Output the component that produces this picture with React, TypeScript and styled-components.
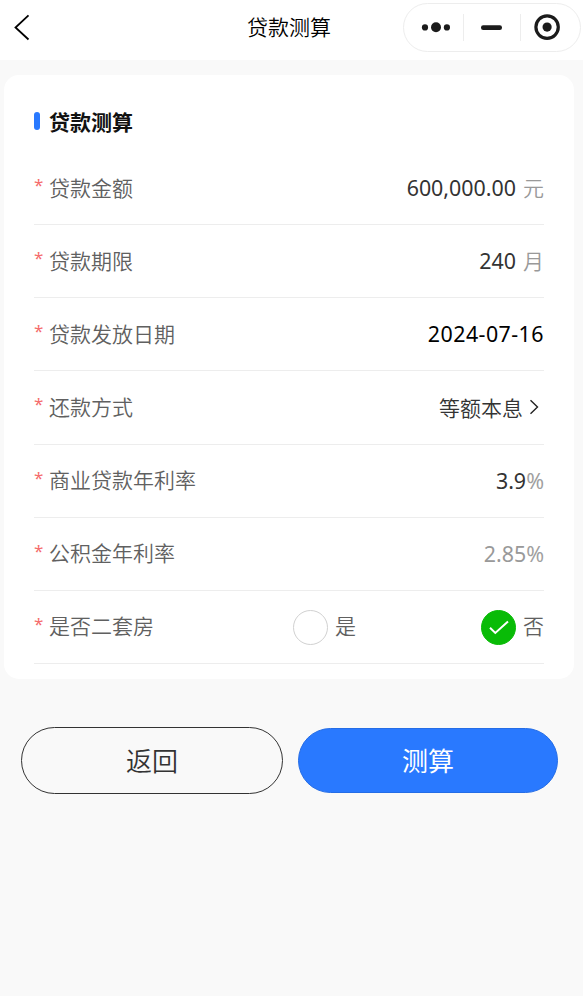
import React from 'react';
import styled, { createGlobalStyle } from 'styled-components';

const GlobalStyle = createGlobalStyle`
  * { box-sizing: border-box; }
  html, body { margin: 0; background: #f9f9f9; }
  body { font-family: 'Noto Sans', 'Noto Sans CJK SC', sans-serif; color: #333; }
  button { font: inherit; }
`;

const cjk = "'Noto Sans CJK SC', sans-serif";

const Page = styled.div`
  width: 583px;
  min-height: 996px;
  background: #f9f9f9;
`;

const NavBar = styled.header`
  display: grid;
  grid-template-columns: 175px 1fr 178px;
  height: 60px;
  padding: 3px 2px 0 0;
  background: #fff;
`;

const BackButton = styled.button`
  justify-self: start;
  width: 44px;
  height: 49px;
  padding: 0;
  border: 0;
  background: none;
  svg { display: block; }
`;

const NavTitle = styled.h1`
  margin: 0;
  font: 350 21px/47px ${cjk};
  color: #000;
  text-align: center;
`;

const Capsule = styled.div`
  display: grid;
  grid-template-columns: 60px 57px 1fr;
  align-items: center;
  width: 178px;
  height: 49px;
  border: 1px solid #ededed;
  border-radius: 25px;
`;

const CapsuleItem = styled.div<{ $divided?: boolean }>`
  height: 27px;
  border-right: ${p => (p.$divided ? '1px solid #ededed' : '0')};
  svg { display: block; }
`;

const Card = styled.section`
  width: 570px;
  height: 604px;
  margin: 15px 0 0 4px;
  padding: 0 30px;
  border-radius: 15px;
  background: #fff;
`;

const CardHeading = styled.div`
  display: flex;
  align-items: center;
  height: 76.97px;
  padding-top: 16px;
`;

const Accent = styled.span`
  width: 6px;
  height: 18px;
  margin-right: 9px;
  border-radius: 3px;
  background: #2979ff;
`;

const CardTitle = styled.h2`
  margin: -1px 0 0;
  font: 700 21px/30px ${cjk};
  color: #111;
`;

const Row = styled.div`
  display: flex;
  justify-content: space-between;
  align-items: center;
  height: 73.15px;
  border-bottom: 1px solid #ededed;
`;

const Label = styled.div`
  display: flex;
  align-items: center;
  margin-top: -3px;
  font: 350 21px/30px ${cjk};
  color: #606060;
`;

const Required = styled.span`
  width: 15px;
  padding: 0 0 3px;
  font: 400 17px/26px 'Noto Sans', sans-serif;
  color: #f56c6c;
`;

const Value = styled.div<{ $color?: string; $spacing?: number }>`
  display: flex;
  align-items: center;
  font: 400 21.4px/30px 'Noto Sans', ${cjk};
  letter-spacing: ${p => p.$spacing ?? 0}px;
  color: ${p => p.$color ?? '#333'};
`;

const Unit = styled.span`
  margin: -2px 0 0 7px;
  font: 350 21px/30px ${cjk};
  color: #999;
`;

const Percent = styled.span`
  font: 400 21.5px/30px 'Noto Sans', sans-serif;
  color: #a0a0a0;
`;

const Choice = styled.div`
  display: flex;
  align-items: center;
  gap: 6px;
  margin-top: -1px;
  padding-right: 5px;
  font: 350 21px/30px ${cjk};
  color: #333;
  svg { display: block; }
`;

const RadioGroup = styled.div`
  display: flex;
  justify-content: space-between;
  width: 251px;
  padding-top: 2px;
`;

const RadioOption = styled.label`
  display: flex;
  align-items: center;
  gap: 7px;
  font: 350 21px/30px ${cjk};
  color: #606060;
`;

const OptionText = styled.span`
  margin-top: -6px;
`;

const Radio = styled.span<{ $checked?: boolean }>`
  display: grid;
  place-items: center;
  width: 35px;
  height: 35px;
  border: 1px solid ${p => (p.$checked ? '#09bb07' : '#d1d1d1')};
  border-radius: 50%;
  background: ${p => (p.$checked ? '#09bb07' : '#fff')};
`;

const Actions = styled.div`
  display: flex;
  align-items: center;
  gap: 15px;
  padding: 48px 0 0 21px;
`;

const ActionButton = styled.button<{ $primary?: boolean }>`
  width: ${p => (p.$primary ? 260 : 262)}px;
  height: ${p => (p.$primary ? 65 : 67)}px;
  padding: 0 0 1px;
  border: 1px solid ${p => (p.$primary ? '#256de6' : '#333')};
  border-radius: 34px;
  background: ${p => (p.$primary ? '#2979ff' : 'transparent')};
  font: ${p => (p.$primary ? 400 : 350)} 26px/1 ${cjk};
  color: ${p => (p.$primary ? '#fff' : '#333')};
`;

const Field = ({ label, children }: { label: string; children: React.ReactNode }) => (
  <Row>
    <Label><Required>*</Required>{label}</Label>
    {children}
  </Row>
);

export default function App() {
  return (
    <Page>
      <GlobalStyle />
      <NavBar>
        <BackButton aria-label="返回">
          <svg width="44" height="49" fill="none" stroke="#000" strokeWidth="1.8">
            <path d="M28.5 12.3 15.5 24.5 28.5 36.5" />
          </svg>
        </BackButton>
        <NavTitle>贷款测算</NavTitle>
        <Capsule>
          <CapsuleItem $divided>
            <svg width="59" height="27" fill="#1b1b1b">
              <circle cx="21" cy="13.4" r="3.1" />
              <circle cx="32" cy="13.2" r="5" />
              <circle cx="42.9" cy="13.4" r="3.1" />
            </svg>
          </CapsuleItem>
          <CapsuleItem $divided>
            <svg width="56" height="27" fill="#1b1b1b">
              <rect x="17" y="11.3" width="21" height="4.6" rx="2.2" />
            </svg>
          </CapsuleItem>
          <CapsuleItem>
            <svg width="57" height="27">
              <circle cx="26.1" cy="13.1" r="11.2" fill="none" stroke="#1b1b1b" strokeWidth="3.2" />
              <circle cx="26.1" cy="13.1" r="4.6" fill="#1b1b1b" />
            </svg>
          </CapsuleItem>
        </Capsule>
      </NavBar>
      <Card>
        <CardHeading><Accent /><CardTitle>贷款测算</CardTitle></CardHeading>
        <Field label="贷款金额">
          <Value>600,000.00<Unit>元</Unit></Value>
        </Field>
        <Field label="贷款期限">
          <Value>240<Unit>月</Unit></Value>
        </Field>
        <Field label="贷款发放日期">
          <Value $color="#000" $spacing={0.45}>2024-07-16</Value>
        </Field>
        <Field label="还款方式">
          <Choice>
            等额本息
            <svg width="10" height="16" fill="none" stroke="#222" strokeWidth="1.4">
              <path d="M1.5 1.2 8.5 8 1.5 14.8" />
            </svg>
          </Choice>
        </Field>
        <Field label="商业贷款年利率">
          <Value>3.9<Percent>%</Percent></Value>
        </Field>
        <Field label="公积金年利率">
          <Value $color="#999">2.85<Percent>%</Percent></Value>
        </Field>
        <Field label="是否二套房">
          <RadioGroup>
            <RadioOption><Radio /><OptionText>是</OptionText></RadioOption>
            <RadioOption>
              <Radio $checked>
                <svg width="20" height="16" fill="none" stroke="#fff" strokeWidth="2">
                  <path d="M1 7.8 6.3 13 19 1.6" />
                </svg>
              </Radio>
              <OptionText>否</OptionText>
            </RadioOption>
          </RadioGroup>
        </Field>
      </Card>
      <Actions>
        <ActionButton>返回</ActionButton>
        <ActionButton $primary>测算</ActionButton>
      </Actions>
    </Page>
  );
}
